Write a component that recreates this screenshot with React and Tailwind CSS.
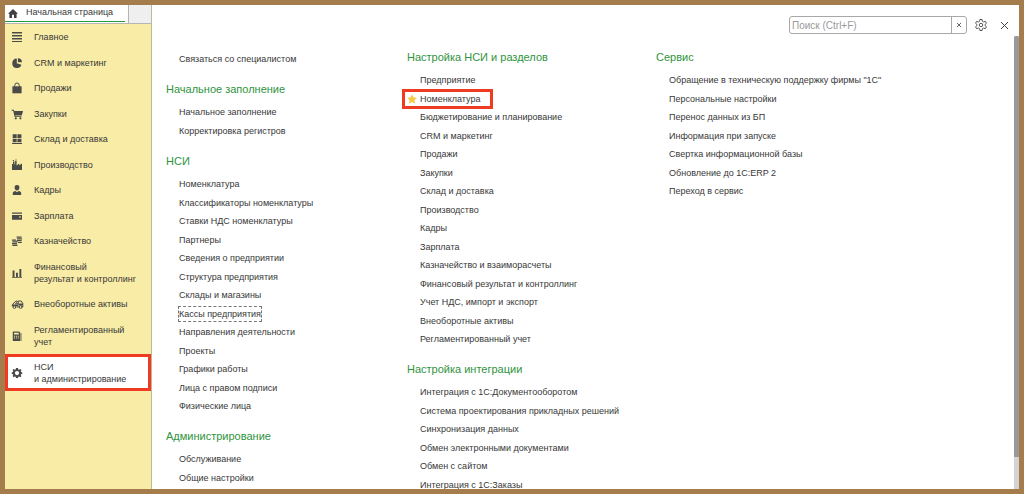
const stroke = { fill: 'none', stroke: 'currentColor' };

const icons = {
  menu: <path d="M0 0h10v1H0zM0 3h10v1H0zM0 6h10v1H0zM0 9h10v1H0zM0 1h10v.5H0zM0 4h10v.5H0zM0 7h10v.5H0z" />,
  pie: (
    <>
      <path d="M4.800 5.200V.6A4.700 4.700 0 1 0 9.400 6.800L4.800 5.200z" />
      <path d="M5.900 4.300V0.200A4.300 4.300 0 0 1 10 4.300z" />
    </>
  ),
  bag: (
    <>
      <path d="M0.400 3.300h9.200V10.300H0.400z" />
      <path d="M2.800 4V2.200a2.200 2.200 0 0 1 4.400 0V4" {...stroke} strokeWidth="1" />
    </>
  ),
  cart: (
    <>
      <path d="M-.4.800h2.200l.5 1.200H11L9.800 6.500H3.200l.2.800h6v.8H2.600L1.200 1.700H-.4z" />
      <circle cx="3.800" cy="9.300" r="1.100" />
      <circle cx="8.400" cy="9.300" r="1.100" />
    </>
  ),
  boxes: <path d="M.7.200h4v3.900h-4zM5.400.2h4v3.900h-4zM.7 4.700h4v3.600h-4zM5.400 4.700h4v3.600h-4zM0 8.900h10V10H0z" />,
  factory: <path d="M0 10V4h1V1.400h1.500V4.500h.6V1h1.500v4.400l2.600-1.800v1.600L10 3.600V10zM.8 0h1.200v.9H.8zM3.400-.4h1.200v.9H3.400z" />,
  person: (
    <path d="M5 0a2.400 2.400 0 0 1 2.400 2.600C7.400 4.300 6.300 5.600 5 5.600S2.600 4.300 2.600 2.600A2.400 2.400 0 0 1 5 0zM.8 10V8.200C.8 6.800 2 6.400 3.400 6L5 7.200 6.600 6c1.400.4 2.600.8 2.600 2.200V10z" />
  ),
  card: <path d="M0 1.400h10v1.400H0zM0 4h10v4.800H0zM7 5.600v1h2v-1z" fillRule="evenodd" />,
  coins: (
    <path d="M4.600.4h5v1.300h-5zM5 2.300h5v1.200H5zM4.600 4.100h5v1.200h-5zM6 5.900h3.800v1.200H6zM0 3.400h4v1.300H0zM.4 5.200h5v1.200h-5zM0 7h5v1.200H0zM.4 8.800h5V10h-5z" />
  ),
  chart: <path d="M.6 2.600h1.900V9H.6zM4 4.800h1.900V9H4zM7.400 1h1.900v8H7.400zM0 9.200h10v.8H0z" />,
  truck: (
    <>
      <path d="M0 6.800 2 3.600l3-1.800.8.800L3.400 4.800h2.800V2h3l1.600 2.400V8h-1.200M4.600 7.900h2.600" {...stroke} strokeWidth="1" />
      <path d="M0 5.400h6v1.800H0zM6.200 4.600h4.600v2H6.200z" />
      <circle cx="2.400" cy="8" r="1.400" {...stroke} />
      <circle cx="8.600" cy="8" r="1.400" {...stroke} />
    </>
  ),
  ledger: (
    <path
      d="M.8.400h6.400l.8.800V10H.8zM2 1.800v1.800h4.800V1.800zM2 4.800v.9h1v-.9zM3.900 4.800v.9h1v-.9zM5.800 4.800v.9h1v-.9zM2 6.600v.9h1v-.9zM3.900 6.600v.9h1v-.9zM5.800 6.600v.9h1v-.9zM8.500 2h.9v8h-.9z"
      fillRule="evenodd"
    />
  ),
  gear: (
    <path
      d="M4 0h2l.3 1.400.8.300L8.400.9l1 1.100-.6 1.200.3.800L10.300 4.400v1.400L9.100 6.200l-.3.800.6 1.200-1.100 1.100-1.200-.7-.8.300L6 10H4l-.3-1.200-.8-.3-1.200.7L.6 8.100l.6-1.200-.3-.7L-.3 5.800V4.400L.9 4l.3-.8L.6 2l1-1.100 1.300.8.800-.3zM5 3a2.100 2.100 0 1 0 0 4.200A2.100 2.100 0 0 0 5 3z"
      fillRule="evenodd"
    />
  ),
};

function Icon({ name }) {
  return (
    <svg viewBox="0 0 10 10" className="size-[10px] shrink-0 overflow-visible fill-current text-[#4a4a48]" aria-hidden="true">
      {icons[name]}
    </svg>
  );
}

const nav = [
  ['menu', 'Главное'],
  ['pie', 'CRM и маркетинг'],
  ['bag', 'Продажи'],
  ['cart', 'Закупки'],
  ['boxes', 'Склад и доставка'],
  ['factory', 'Производство'],
  ['person', 'Кадры'],
  ['card', 'Зарплата'],
  ['coins', 'Казначейство'],
  ['chart', 'Финансовый', 'результат и контроллинг'],
  ['truck', 'Внеоборотные активы'],
  ['ledger', 'Регламентированный', 'учет'],
  ['gear', 'НСИ', 'и администрирование'],
];

const columns = [
  [
    { items: ['Связаться со специалистом'] },
    { title: 'Начальное заполнение', items: ['Начальное заполнение', 'Корректировка регистров'] },
    {
      title: 'НСИ',
      focused: 'Кассы предприятия',
      items: [
        'Номенклатура',
        'Классификаторы номенклатуры',
        'Ставки НДС номенклатуры',
        'Партнеры',
        'Сведения о предприятии',
        'Структура предприятия',
        'Склады и магазины',
        'Кассы предприятия',
        'Направления деятельности',
        'Проекты',
        'Графики работы',
        'Лица с правом подписи',
        'Физические лица',
      ],
    },
    { title: 'Администрирование', items: ['Обслуживание', 'Общие настройки'] },
  ],
  [
    {
      title: 'Настройка НСИ и разделов',
      starred: 'Номенклатура',
      items: [
        'Предприятие',
        'Номенклатура',
        'Бюджетирование и планирование',
        'CRM и маркетинг',
        'Продажи',
        'Закупки',
        'Склад и доставка',
        'Производство',
        'Кадры',
        'Зарплата',
        'Казначейство и взаиморасчеты',
        'Финансовый результат и контроллинг',
        'Учет НДС, импорт и экспорт',
        'Внеоборотные активы',
        'Регламентированный учет',
      ],
    },
    {
      title: 'Настройка интеграции',
      items: [
        'Интеграция с 1С:Документооборотом',
        'Система проектирования прикладных решений',
        'Синхронизация данных',
        'Обмен электронными документами',
        'Обмен с сайтом',
        'Интеграция с 1С:Заказы',
      ],
    },
  ],
  [
    {
      title: 'Сервис',
      items: [
        'Обращение в техническую поддержку фирмы "1С"',
        'Персональные настройки',
        'Перенос данных из БП',
        'Информация при запуске',
        'Свертка информационной базы',
        'Обновление до 1С:ERP 2',
        'Переход в сервис',
      ],
    },
  ],
];

function Sidebar() {
  return (
    <aside className="flex w-[147px] shrink-0 flex-col border-r border-[#bdb99c] bg-[#f8eca6]">
      <div className="flex h-[19px] shrink-0 border-b border-[#b5b5b5] bg-[#efefef]">
        <a href="#home" className="flex w-[124px] flex-col border-r border-[#b5b5b5] bg-white pr-[3px] pb-px">
          <span className="flex flex-1 items-center gap-2 border-b border-[#1f9a45] pl-[3px] whitespace-nowrap">
            <svg viewBox="0 0 10 9" className="h-[9px] w-[10px] fill-[#404040]" aria-hidden="true">
              <path d="M5 0 10 4.800H8.600V9H6V5.800H4V9H1.400V4.800H0z" />
            </svg>
            Начальная страница
          </span>
        </a>
      </div>
      <nav>
        <ul>
          {nav.map(([icon, first, second]) => (
            <li key={first} className={second ? 'h-[37px]' : 'odd:h-[26px] even:h-[25px]'}>
              <a
                href="#section"
                className={
                  icon === 'gear'
                    ? 'relative flex h-full items-center gap-3 bg-white pl-[7px] leading-3 whitespace-nowrap'
                    : 'flex h-full items-center gap-3 pl-[7px] leading-3 whitespace-nowrap'
                }
              >
                <Icon name={icon} />
                <span>
                  {first}
                  {second && <span className="block">{second}</span>}
                </span>
                {icon === 'gear' && <span className="absolute inset-0 border-3 border-[#ee3b22]" />}
              </a>
            </li>
          ))}
        </ul>
      </nav>
    </aside>
  );
}

function Section({ title, items, focused, starred }) {
  return (
    <section>
      {title && <h2 className="mb-[5px] text-[11px] leading-[18px] whitespace-nowrap text-[#2f9440]">{title}</h2>}
      <ul className="pl-[13px]">
        {items.map((item) => (
          <li key={item} className="flex items-center whitespace-nowrap odd:h-[18px] even:h-[19px]">
            <a
              href="#item"
              className={
                item === focused ? 'leading-[14px] outline-1 outline-[#777777] outline-dashed' : 'relative leading-[14px]'
              }
            >
              {item}
              {item === starred && (
                <span className="absolute -inset-y-[3px] -right-[13px] -left-[18px] flex items-center border-3 border-[#ee3b22] pl-[2px]">
                  <svg viewBox="0 0 10 10" className="size-[10px] fill-[#f6c845]" aria-hidden="true">
                    <path d="m5 .2 1.500 3.200 3.400.400-2.500 2.400.6 3.500L5 8 2 9.700l.6-3.500L.1 3.800l3.400-.4z" />
                  </svg>
                </span>
              )}
            </a>
          </li>
        ))}
      </ul>
    </section>
  );
}

function Toolbar() {
  return (
    <header className="flex h-[31px] shrink-0 items-end justify-end pr-[10px] pb-[2px]">
      <div className="flex h-[18px] w-[178px] overflow-hidden rounded-[3px] border border-[#a8a8a8]">
        <input
          type="text"
          aria-label="Поиск"
          placeholder="Поиск (Ctrl+F)"
          className="min-w-0 flex-1 pl-[2px] text-[10px] outline-none placeholder:text-[#9a9a9a]"
        />
        <button type="button" aria-label="Очистить" className="flex w-[15px] items-center justify-center border-l border-[#a8a8a8]">
          <svg viewBox="0 0 4 4" className="size-1 overflow-visible" aria-hidden="true">
            <path d="m0 0 4 4M4 0 0 4" {...stroke} stroke="#666666" />
          </svg>
        </button>
      </div>
      <button type="button" aria-label="Настройки" className="ml-2 flex h-[18px] items-center">
        <svg viewBox="0 0 24 24" className="size-3 overflow-visible" {...stroke} stroke="#555555" strokeWidth="2" strokeLinejoin="round" aria-hidden="true">
          <path d="M9.800 1h4.400l.7 3.600 2.300 1.300 3.500-1.200 2.200 3.800-2.800 2.400v2.200l2.800 2.400-2.200 3.800-3.500-1.200-2.300 1.300-.7 3.600H9.800l-.7-3.600-2.300-1.300-3.500 1.200-2.200-3.800 2.800-2.400v-2.200L1.100 8.500l2.200-3.800 3.500 1.200 2.300-1.300z" />
          <circle cx="12" cy="12" r="3.500" />
        </svg>
      </button>
      <button type="button" aria-label="Закрыть" className="ml-[13px] flex h-[18px] items-center px-px">
        <svg viewBox="0 0 7 7" className="size-[7px] overflow-visible" aria-hidden="true">
          <path d="m0 0 7 7M7 0 0 7" {...stroke} stroke="#444444" />
        </svg>
      </button>
    </header>
  );
}

export default function App() {
  return (
    <div className="flex h-screen overflow-hidden border-5 border-[#a57c4b] bg-white font-['Liberation_Sans',Arial,sans-serif] text-[9px] text-[#383838]">
      <Sidebar />
      <main className="flex min-w-0 flex-1 flex-col">
        <Toolbar />
        <div className="flex min-h-0 flex-1">
          <div className="grid min-w-0 flex-1 grid-cols-[241px_249px_1fr] overflow-hidden pt-3 pl-[14px]">
            {columns.map((sections, index) => (
              <div key={index} className="flex flex-col gap-3 first:pt-[2px]">
                {sections.map((section) => (
                  <Section key={section.items[0]} {...section} />
                ))}
              </div>
            ))}
          </div>
          <div className="w-[5px] shrink-0 bg-[#d4d4d4]">
            <div className="h-[93%] rounded-t-[2px] bg-[#999999]" />
          </div>
        </div>
      </main>
    </div>
  );
}
